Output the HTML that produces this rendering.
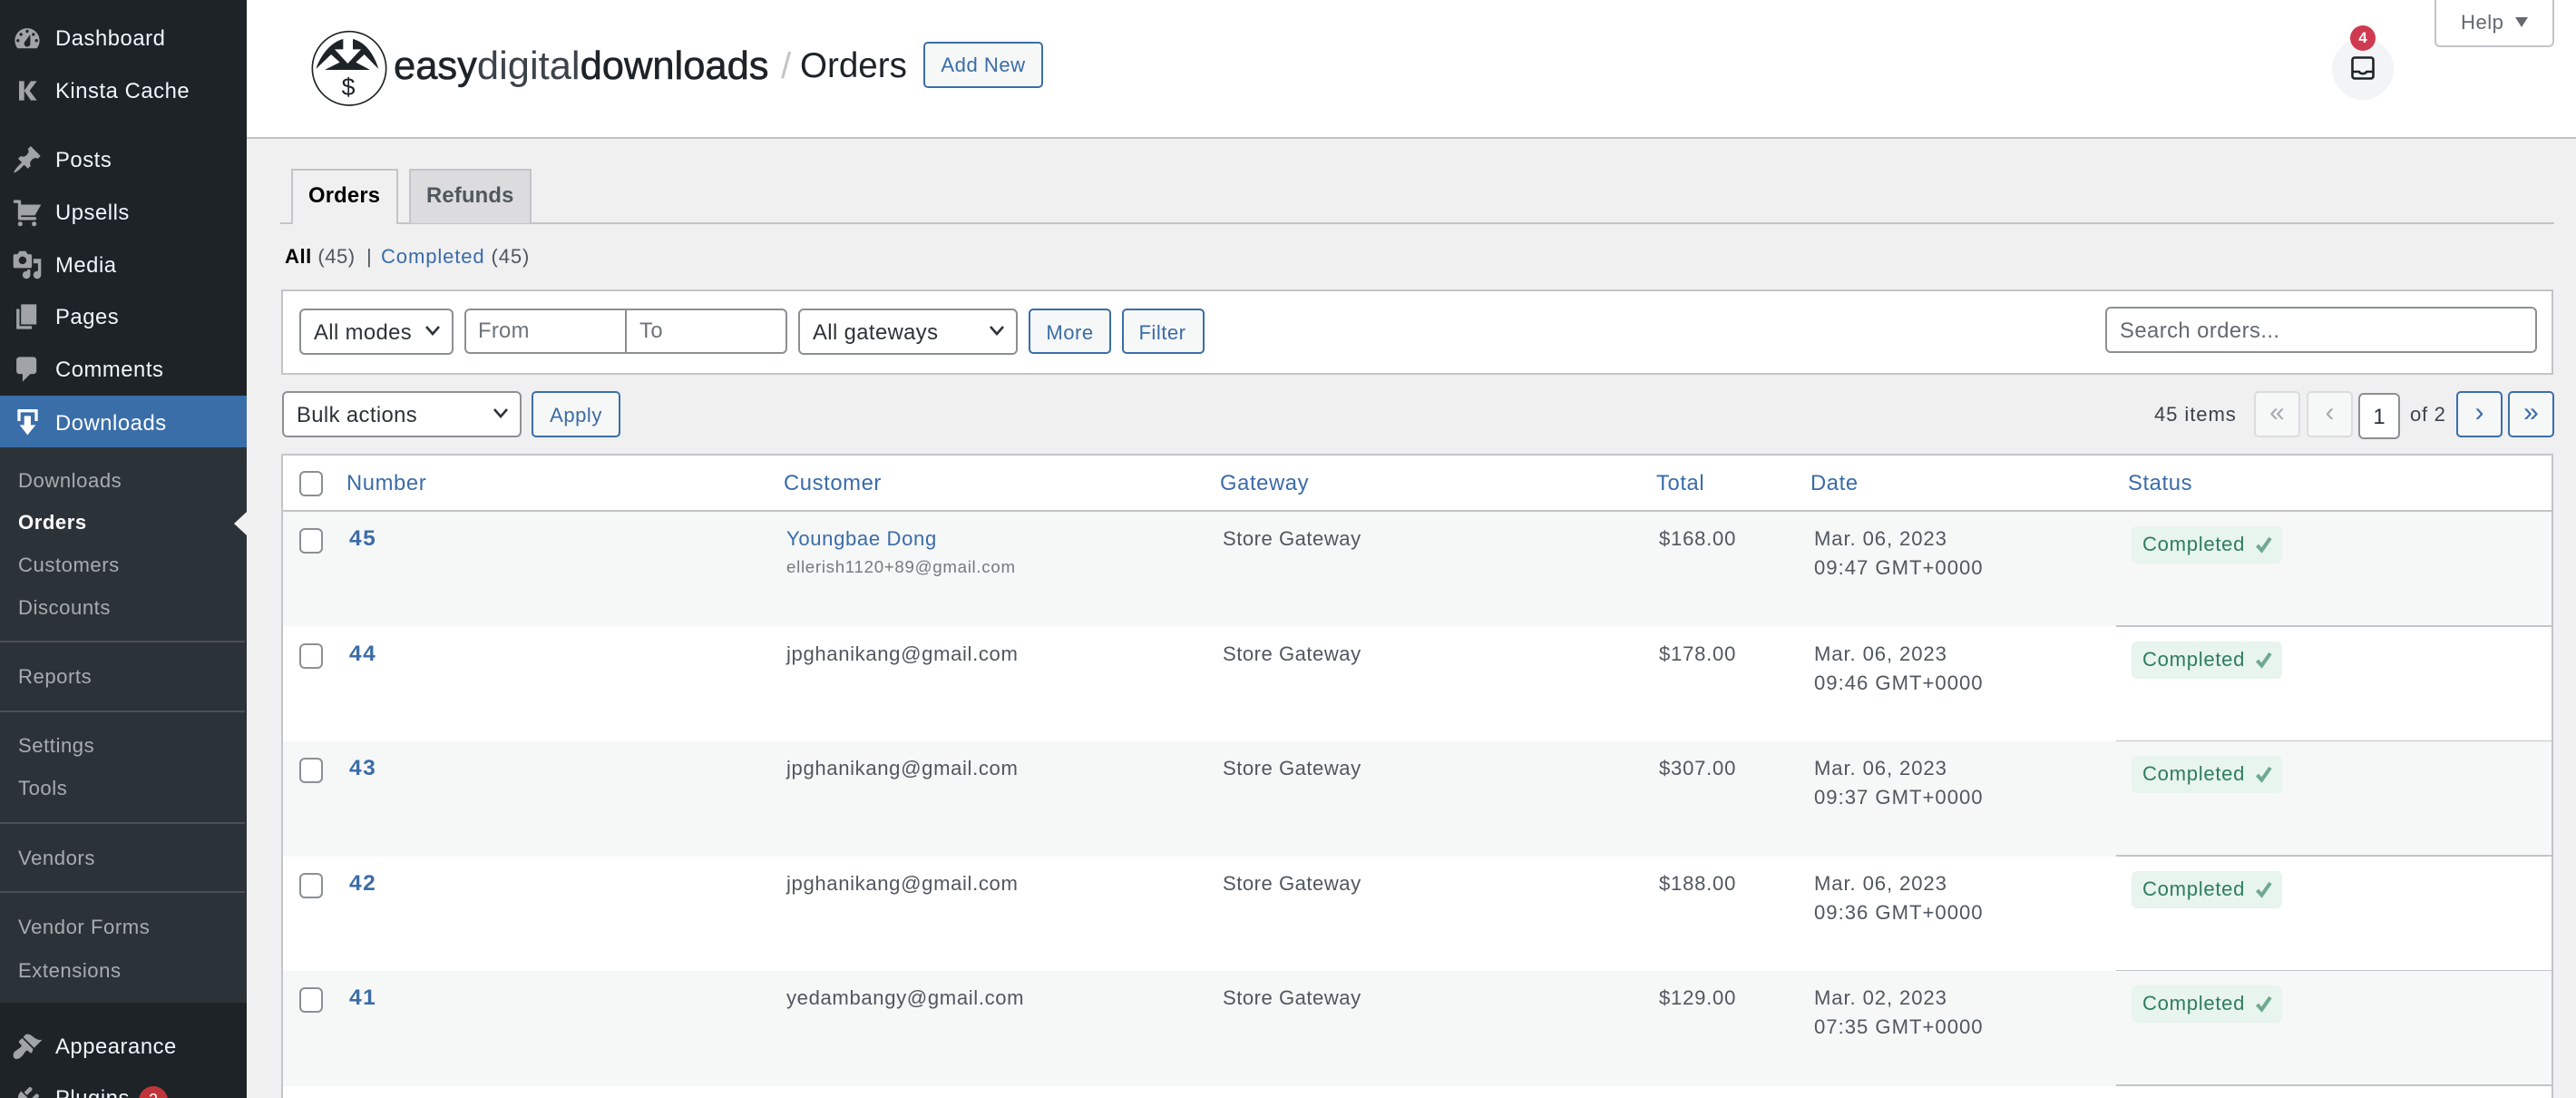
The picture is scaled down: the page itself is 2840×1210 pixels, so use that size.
<!DOCTYPE html>
<html><head><meta charset="utf-8"><title>Orders</title>
<style>
*{box-sizing:border-box}
html,body{margin:0;padding:0;width:2840px;height:1210px;overflow:hidden;background:#f0f0f1;font-family:"Liberation Sans",Arial,sans-serif;color:#3c434a}
#wrap{position:absolute;left:0;top:0;width:2840px;height:1210px;overflow:hidden;background:#f0f0f1}
.t{position:absolute;white-space:nowrap;line-height:30px;height:30px;font-size:22.1px;letter-spacing:.5px}
.abs{position:absolute}
a{color:#3a6ca8;text-decoration:none}
#side{position:absolute;left:0;top:0;width:272px;height:1210px;background:#1d2327;overflow:hidden}
#side .m{color:#f0f6fc;font-size:23.8px;left:61px;letter-spacing:.55px}
#side .s{color:#a8acb0;font-size:22.1px;left:20px;letter-spacing:.55px}
#side svg{position:absolute;left:13px;width:34px;height:34px;fill:#a0a4a8}
.sep{position:absolute;left:0;width:270px;height:2px;background:#4a5056}
.btn{position:absolute;border:2px solid #3a6ea9;border-radius:5px;background:#f6f7f7;color:#3a6ca8;text-align:center;font-size:22.1px;letter-spacing:.5px;line-height:50px}
.fld{position:absolute;border:2px solid #8c8f94;border-radius:6px;background:#fff;font-size:23.8px;color:#2c3338;letter-spacing:.4px;line-height:49px;padding-left:14px}
.fld svg{position:absolute;right:11px;top:15px;width:20px;height:16px;fill:none;stroke:#2c3338;stroke-width:2.6}
.pg{position:absolute;top:431px;width:51px;height:51px;border-radius:5px;text-align:center;font-size:30px;line-height:44px}
.cb{position:absolute;left:330px;width:26px;height:28px;border:2px solid #8c8f94;border-radius:6px;background:#fff}
.row{position:absolute;left:312px;width:2501px;height:127px}
.row.o{background:#f6f7f7}
.row .t{color:#50575e}
.row .n{left:73px;top:15px;font-weight:bold;font-size:24.5px;letter-spacing:1.5px;color:#3a6ca8}
.row .c{left:555px;top:15px;letter-spacing:.63px}
.row .g{left:1036px;top:15px}
.row .a{left:1517px;top:15px;letter-spacing:.75px}
.row .d{left:1688px;top:15px;letter-spacing:.9px}
.row .d2{left:1688px;top:47px;letter-spacing:1px}
.row .cb{left:18px;top:18px}
.row .b{position:absolute;left:2038px;top:16px;width:166px;height:41px;background:#e8f4ee;border-radius:6px}
.row .b span{position:absolute;left:12px;top:5px;line-height:30px;color:#2e7d5e;font-size:22.1px;letter-spacing:.7px}
.row .b svg{position:absolute;left:137px;top:10px;width:18px;height:20px;fill:none;stroke:#6fa98f;stroke-width:4}
.row .ln{position:absolute;left:2021px;right:0;top:125px;height:2px;background:#c3c4c7}
.th{top:518px;color:#3a6ca8;font-size:23.8px;letter-spacing:.6px}
</style></head><body>
<div id="wrap">
<div id="side">
<div class="abs" style="left:0;top:436px;width:272px;height:57px;background:#3a6ea9"></div>
<div class="abs" style="left:0;top:493px;width:272px;height:612px;background:#2c3338"></div>

<svg viewBox="0 0 20 20" style="top:25.5px"><path d="M3.76 16h12.48c1.1-1.37 1.76-3.11 1.76-5 0-4.42-3.58-8-8-8s-8 3.58-8 8c0 1.89.66 3.63 1.76 5zM10 4c.55 0 1 .45 1 1s-.45 1-1 1-1-.45-1-1 .45-1 1-1zM6 6c.55 0 1 .45 1 1s-.45 1-1 1-1-.45-1-1 .45-1 1-1zm8 0c.55 0 1 .45 1 1s-.45 1-1 1-1-.45-1-1 .45-1 1-1zm-5.37 5.55L12 7v6c0 1.1-.9 2-2 2s-2-.9-2-2c0-.57.24-1.08.63-1.45zM4 10c.55 0 1 .45 1 1s-.45 1-1 1-1-.45-1-1 .45-1 1-1zm12 0c.55 0 1 .45 1 1s-.45 1-1 1-1-.45-1-1 .45-1 1-1z"/></svg>
<div class="t m" style="top:28px">Dashboard</div>
<svg viewBox="0 0 150 300" style="left:10px;top:20px;width:50px;height:100px"><path d="M33 208H50V272H33zM72 208H92L68 240L92 272H72L50 240z"/></svg>
<div class="t m" style="top:86px">Kinsta Cache</div>
<svg viewBox="0 0 20 20" style="top:159px"><path d="M10.44 3.02l1.82-1.82 6.36 6.35-1.83 1.82c-1.05-.68-2.48-.57-3.41.36l-.75.75c-.92.93-1.04 2.35-.35 3.41l-1.83 1.82-2.41-2.41-2.8 2.79c-.42.42-3.38 2.71-3.8 2.29s1.86-3.39 2.28-3.81l2.79-2.79L4.1 9.36l1.83-1.82c1.05.69 2.48.57 3.4-.36l.75-.75c.93-.92 1.05-2.35.36-3.41z"/></svg>
<div class="t m" style="top:162px">Posts</div>
<svg viewBox="0 0 20 20" style="top:217px"><path d="M6 13h9c.55 0 1 .45 1 1s-.45 1-1 1H5c-.55 0-1-.45-1-1V4H2c-.55 0-1-.45-1-1s.45-1 1-1h3c.55 0 1 .45 1 1v2h13l-4 7H6v1zm-.5 3c.83 0 1.5.67 1.500 1.500S6.330 19 5.500 19 4 18.330 4 17.500 4.670 16 5.500 16zm9 0c.83 0 1.500.67 1.500 1.500s-.67 1.500-1.500 1.500-1.500-.67-1.500-1.500.67-1.500 1.500-1.500z"/></svg>
<div class="t m" style="top:220px">Upsells</div>
<svg viewBox="0 0 20 20" style="top:275px"><path d="M13 11V4c0-.55-.45-1-1-1h-1.670L9 1H5L3.670 3H2c-.55 0-1 .45-1 1v7c0 .55.45 1 1 1h10c.55 0 1-.45 1-1zM7 4.500c1.380 0 2.500 1.120 2.500 2.500S8.380 9.500 7 9.500 4.500 8.380 4.500 7 5.620 4.500 7 4.500zM14 6h5v10.500c0 1.380-1.120 2.500-2.500 2.500S14 17.880 14 16.500s1.120-2.500 2.500-2.500c.17 0 .34.02.5.05V9h-3V6zm-4 8.050V13h2v3.500c0 1.380-1.120 2.500-2.500 2.500S7 17.880 7 16.500 8.120 14 9.500 14c.17 0 .34.02.5.05z"/></svg>
<div class="t m" style="top:278px">Media</div>
<svg viewBox="0 0 20 20" style="top:332px"><path d="M6 15V2h10v13H6zm-1 1h8v2H3V5h2v11z"/></svg>
<div class="t m" style="top:335px">Pages</div>
<svg viewBox="0 0 20 20" style="top:390px"><path d="M5 2h9c1.100 0 2 .9 2 2v7c0 1.100-.9 2-2 2h-2l-5 5v-5H5c-1.100 0-2-.9-2-2V4c0-1.100.9-2 2-2z"/></svg>
<div class="t m" style="top:393px">Comments</div>
<svg viewBox="0 0 150 150" style="left:10px;top:440px;width:50px;height:50px;fill:#fff"><path d="M28 33H95V72H85V43H38V72H28ZM50 55H72V85H88L61 118L35 85H50Z"/></svg>
<div class="t m" style="top:452px;color:#fff">Downloads</div>

<div class="t s" style="top:515px">Downloads</div>
<div class="t s" style="top:561px;color:#fff;font-weight:bold">Orders</div>
<div class="abs" style="left:258px;top:564px;width:0;height:0;border-style:solid;border-width:13px 14px 13px 0;border-color:transparent #f0f0f1 transparent transparent"></div>
<div class="t s" style="top:608px">Customers</div>
<div class="t s" style="top:655px">Discounts</div>
<div class="sep" style="top:706px"></div>
<div class="t s" style="top:731px">Reports</div>
<div class="sep" style="top:783px"></div>
<div class="t s" style="top:807px">Settings</div>
<div class="t s" style="top:854px">Tools</div>
<div class="sep" style="top:906px"></div>
<div class="t s" style="top:931px">Vendors</div>
<div class="sep" style="top:982px"></div>
<div class="t s" style="top:1007px">Vendor Forms</div>
<div class="t s" style="top:1055px">Extensions</div>

<svg viewBox="0 0 20 20" style="top:1136px"><path d="M14.480 11.060L7.410 3.990l1.500-1.500c.5-.56 2.300-.47 3.510.32 1.210.8 1.430 1.280 2.910 2.100 1.180.64 2.450 1.260 4.450.85zm-.71.71L6.700 4.700 4.930 6.470c-.39.39-.39 1.020 0 1.410l1.060 1.060c.39.39.39 1.030 0 1.420-.6.6-1.430 1.110-2.210 1.690-.35.26-.7.53-1.010.84C1.430 13.230.28 15.720 1.430 17.600c1.430 1.420 3.930.27 5.270-1.360.32-.31.58-.67.84-1.020.58-.78 1.090-1.600 1.690-2.200.39-.39 1.020-.39 1.410 0l1.060 1.060c.39.39 1.020.39 1.410 0z"/></svg>
<div class="t m" style="top:1139px">Appearance</div>
<svg viewBox="0 0 20 20" style="top:1194px"><path d="M13.110 4.360L9.870 7.600 8 5.730l3.240-3.240c.35-.34 1.050-.2 1.560.32.52.51.66 1.210.31 1.550zm-8 1.770l.91-1.120 9.010 9.010-1.190.84c-.71.71-2.630 1.160-3.820 1.160H6.140L4.900 17.260c-.59.59-1.540.59-2.120 0-.59-.58-.59-1.530 0-2.120l1.240-1.240v-3.880c0-1.130.4-3.190 1.090-3.890zm7.260 3.970l3.240-3.240c.34-.35 1.040-.21 1.550.31.52.51.66 1.210.31 1.550l-3.240 3.250z"/></svg>
<div class="t m" style="top:1196px">Plugins</div>
<div class="abs" style="left:153px;top:1197px;width:32px;height:32px;border-radius:16px;background:#c0363a;color:#fff;font-size:18px;text-align:center;line-height:30px">2</div>
</div>

<!-- header -->
<div class="abs" style="left:272px;top:0;width:2568px;height:153px;background:#fff;border-bottom:2px solid #c3c4c7"></div>
<svg class="abs" style="left:334px;top:31px" width="100" height="95" viewBox="0 0 300 285">
<circle cx="153" cy="133" r="122" fill="#fff" stroke="#1d2327" stroke-width="5"/>
<path fill="#1d2327" d="M43 135C60 85 95 45 133 36V70H105L148 117L192 70H165V36C205 45 235 85 250 135L203 87L175 113L222 138H72L122 113L93 87Z"/>
<text x="150" y="222" text-anchor="middle" font-size="80" fill="#1d2327" font-family="Liberation Sans, sans-serif">$</text>
</svg>
<div class="t" style="left:434px;top:57px;height:32px;line-height:32px;font-size:43.5px;color:#1d2327;letter-spacing:0"><span style="-webkit-text-stroke:.6px #1d2327">easy</span><span style="color:#3c434a">digital</span><span style="-webkit-text-stroke:.6px #1d2327">downloads</span></div>
<div class="t" style="left:861px;top:57px;height:32px;line-height:32px;font-size:40px;color:#c3c4c7">/</div>
<div class="t" style="left:882px;top:57px;height:32px;line-height:32px;font-size:38.6px;color:#1d2327;letter-spacing:0">Orders</div>
<div class="btn" style="left:1018px;top:46px;width:132px;height:51px;line-height:47px">Add New</div>

<div class="abs" style="left:2684px;top:-4px;width:132px;height:56px;background:#fff;border:2px solid #c3c4c7;border-radius:0 0 6px 6px"></div>
<div class="t" style="left:2713px;top:10px;color:#646970;letter-spacing:.5px">Help</div>
<div class="abs" style="left:2773px;top:19px;width:0;height:0;border-style:solid;border-width:11px 7px 0 7px;border-color:#646970 transparent transparent transparent"></div>

<div class="abs" style="left:2571px;top:42px;width:68px;height:68px;border-radius:34px;background:#f3f4f5"></div>
<svg class="abs" style="left:2592px;top:62px" width="26" height="26" viewBox="0 0 26 26" fill="none" stroke="#1d2327" stroke-width="2.600" stroke-linejoin="round"><rect x="1.500" y="1.500" width="23" height="23" rx="2.500"/><path d="M1.500 17H9c.8 2.800 7.200 2.800 8 0h7.500"/></svg>
<div class="abs" style="left:2591px;top:28px;width:28px;height:28px;border-radius:14px;background:#cf3a50;color:#fff;font-size:17px;font-weight:bold;text-align:center;line-height:28px">4</div>

<!-- tabs -->
<div class="abs" style="left:309px;top:245px;width:2507px;height:2px;background:#c3c4c7"></div>
<div class="abs" style="left:321px;top:186px;width:118px;height:61px;background:#f0f0f1;border:2px solid #c3c4c7;border-bottom:none"></div>
<div class="abs" style="left:451px;top:186px;width:135px;height:60px;background:#dcdcde;border:2px solid #c3c4c7;border-bottom:none"></div>
<div class="t" style="left:340px;top:201px;font-size:23.8px;font-weight:bold;color:#000;letter-spacing:.2px">Orders</div>
<div class="t" style="left:470px;top:201px;font-size:23.8px;font-weight:bold;color:#50575e;letter-spacing:.2px">Refunds</div>

<div class="t" style="left:314px;top:268px"><b style="color:#000">All</b> <span style="color:#50575e">(45)</span></div>
<div class="t" style="left:404px;top:268px;color:#50575e">|</div>
<div class="t" style="left:420px;top:268px;letter-spacing:.85px"><a>Completed</a> <span style="color:#50575e">(45)</span></div>

<!-- filter box -->
<div class="abs" style="left:310px;top:319px;width:2505px;height:94px;background:#fff;border:2px solid #c3c4c7"></div>
<div class="fld" style="left:330px;top:340px;width:170px;height:51px">All modes<svg viewBox="0 0 20 16"><path d="M3 3l7 8 7-8"/></svg></div>
<div class="abs" style="left:512px;top:340px;width:356px;height:50px;border:2px solid #8c8f94;border-radius:6px;background:#fff"></div>
<div class="abs" style="left:689px;top:340px;width:2px;height:50px;background:#8c8f94"></div>
<div class="t" style="left:527px;top:350px;font-size:23.800px;color:#6e7378;letter-spacing:.3px">From</div>
<div class="t" style="left:705px;top:350px;font-size:23.800px;color:#6e7378">To</div>
<div class="fld" style="left:880px;top:340px;width:242px;height:51px">All gateways<svg viewBox="0 0 20 16"><path d="M3 3l7 8 7-8"/></svg></div>
<div class="btn" style="left:1134px;top:340px;width:91px;height:50px;line-height:49px">More</div>
<div class="btn" style="left:1237px;top:340px;width:91px;height:50px;line-height:49px;padding-right:2px">Filter</div>
<div class="fld" style="left:2321px;top:338px;width:476px;height:51px;color:#646970;padding-left:14px;letter-spacing:.45px;line-height:50px">Search orders...</div>

<!-- bulk -->
<div class="fld" style="left:311px;top:431px;width:264px;height:51px">Bulk actions<svg viewBox="0 0 20 16"><path d="M3 3l7 8 7-8"/></svg></div>
<div class="btn" style="left:586px;top:431px;width:98px;height:51px;line-height:49px">Apply</div>

<div class="t" style="left:2375px;top:442px;color:#3c434a;letter-spacing:.9px">45 items</div>
<div class="pg" style="left:2485px;border:2px solid #dcdcde;background:#f6f7f7;color:#a7aaad">«</div>
<div class="pg" style="left:2543px;border:2px solid #dcdcde;background:#f6f7f7;color:#a7aaad">‹</div>
<div class="abs" style="left:2600px;top:433px;width:46px;height:51px;border:2px solid #8c8f94;border-radius:6px;background:#fff;color:#2c3338;font-size:23.800px;text-align:center;line-height:50px">1</div>
<div class="t" style="left:2657px;top:442px;color:#3c434a;letter-spacing:.7px">of 2</div>
<div class="pg" style="left:2708px;border:2px solid #3a6ea9;background:#f6f7f7;color:#3a6ca8">›</div>
<div class="pg" style="left:2765px;border:2px solid #3a6ea9;background:#f6f7f7;color:#3a6ca8">»</div>

<!-- table -->
<div class="abs" style="left:310px;top:500px;width:2505px;height:720px;background:#fff;border:2px solid #c3c4c7"></div>
<div class="abs" style="left:312px;top:562px;width:2501px;height:2px;background:#c3c4c7"></div>
<div class="abs" style="left:2333px;top:562px;width:480px;height:4px;background:#c3c4c7"></div>
<div class="cb" style="top:519px"></div>
<div class="t th" style="left:382px">Number</div>
<div class="t th" style="left:864px">Customer</div>
<div class="t th" style="left:1345px">Gateway</div>
<div class="t th" style="left:1826px">Total</div>
<div class="t th" style="left:1996px">Date</div>
<div class="t th" style="left:2346px">Status</div>

<div class="row o" style="top:564px;height:126px">
<div class="cb"></div><div class="t n">45</div>
<div class="t c"><a>Youngbae Dong</a></div>
<div class="t" style="left:555px;top:46px;font-size:18.700px;color:#757a80;letter-spacing:.7px">ellerish1120+89@gmail.com</div>
<div class="t g">Store Gateway</div><div class="t a">$168.00</div><div class="t d">Mar. 06, 2023</div><div class="t d2">09:47 GMT+0000</div>
<div class="b"><span>Completed</span><svg viewBox="0 0 18 20"><path d="M1.500 11L6.500 16.500L16 3"/></svg></div><div class="ln"></div>
</div>
<div class="row" style="top:690.5px">
<div class="cb"></div><div class="t n">44</div>
<div class="t c">jpghanikang@gmail.com</div>
<div class="t g">Store Gateway</div><div class="t a">$178.00</div><div class="t d">Mar. 06, 2023</div><div class="t d2">09:46 GMT+0000</div>
<div class="b"><span>Completed</span><svg viewBox="0 0 18 20"><path d="M1.500 11L6.500 16.500L16 3"/></svg></div><div class="ln"></div>
</div>
<div class="row o" style="top:817px">
<div class="cb"></div><div class="t n">43</div>
<div class="t c">jpghanikang@gmail.com</div>
<div class="t g">Store Gateway</div><div class="t a">$307.00</div><div class="t d">Mar. 06, 2023</div><div class="t d2">09:37 GMT+0000</div>
<div class="b"><span>Completed</span><svg viewBox="0 0 18 20"><path d="M1.500 11L6.500 16.500L16 3"/></svg></div><div class="ln"></div>
</div>
<div class="row" style="top:943.5px">
<div class="cb"></div><div class="t n">42</div>
<div class="t c">jpghanikang@gmail.com</div>
<div class="t g">Store Gateway</div><div class="t a">$188.00</div><div class="t d">Mar. 06, 2023</div><div class="t d2">09:36 GMT+0000</div>
<div class="b"><span>Completed</span><svg viewBox="0 0 18 20"><path d="M1.500 11L6.500 16.500L16 3"/></svg></div><div class="ln"></div>
</div>
<div class="row o" style="top:1070px">
<div class="cb"></div><div class="t n">41</div>
<div class="t c">yedambangy@gmail.com</div>
<div class="t g">Store Gateway</div><div class="t a">$129.00</div><div class="t d">Mar. 02, 2023</div><div class="t d2">07:35 GMT+0000</div>
<div class="b"><span>Completed</span><svg viewBox="0 0 18 20"><path d="M1.500 11L6.500 16.500L16 3"/></svg></div><div class="ln"></div>
</div>
</div>
</body></html>
